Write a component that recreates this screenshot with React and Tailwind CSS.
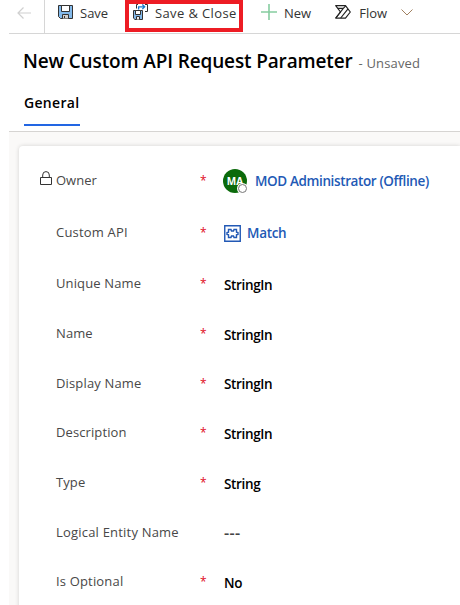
import React from "react";

function SaveIcon({ className }) {
  return (
    <svg className={className} viewBox="0 0 15 15" fill="none">
      <path d="M.5 .5H14.500V13.500H2.500L.5 11.500Z" fill="#83b9ea" stroke="#333" />
      <path d="M3.500 .5H11.500V6.500H3.500Z" fill="#fff" stroke="#333" />
      <path d="M4.500 13.500V9.500H10.500V13.500" fill="#d2d0ce" stroke="#333" />
      <path d="M6.500 11V13" stroke="#333" />
    </svg>
  );
}

function SaveCloseIcon() {
  return (
    <svg className="h-4 w-[15px] shrink-0" viewBox="0 0 15 16" fill="none">
      <path d="M.5 6.500H9.500V15.500H2L.5 14.200Z" fill="#83b9ea" stroke="#333" />
      <path d="M2.500 6.500H7.500V10.500H2.500Z" fill="#fff" stroke="#333" />
      <path d="M3.500 15.500V12.500H6.500V15.500" fill="#eee" stroke="#333" />
      <path d="M5 .5H3.500V4.500M12 .5H14.500V7.500H12" stroke="#333" />
      <path d="M5.600 5.500V2.800H11.500M9.300 .5L11.700 2.800L9.300 5.100" stroke="#1979ca" strokeWidth="1.300" />
    </svg>
  );
}

function FlowIcon() {
  return (
    <svg className="h-[14px] w-4 shrink-0" viewBox="0 0 16 14" fill="none" stroke="#222" strokeWidth="1.200" strokeLinejoin="round">
      <path d="M.7 .7H10.500L15.300 7L10.500 13.100H.7L5.500 7Z" />
      <path d="M2.800 3.400H8.300L10.700 .8M8.300 3.400L.8 13M13 3.800L5.700 13" />
    </svg>
  );
}

function LockIcon() {
  return (
    <svg className="h-[15px] w-3" viewBox="0 0 12 15" fill="none" stroke="#333" strokeWidth="1">
      <path d="M.5 6.500H11.500V13.500H.5ZM2.700 6.500V4A3.300 3.400 0 0 1 9.300 4V6.500" />
    </svg>
  );
}

function PuzzleIcon() {
  return (
    <svg className="h-[17px] w-[17px] shrink-0" viewBox="0 0 17 17" fill="none" stroke="#2259b5">
      <path d="M.75 .75H16.250V16.250H.75Z" strokeWidth="1.400" />
      <path d="M4.500 4.500H7L7.500 6H9.500L10 4.500H12.500V7.200L14 7.500V9.500L12.500 9.800V12.500H10L9.500 11H7.500L7 12.500H4.500V9.800L3 9.500V7.500L4.500 7.200Z" strokeWidth="1.400" />
    </svg>
  );
}

const rows = [
  { label: "Unique Name", value: "StringIn", h: "h-[50px]", tracking: "tracking-[0.13px]" },
  { label: "Name", value: "StringIn", h: "h-[50px]", tracking: "tracking-[0.1px]" },
  { label: "Display Name", value: "StringIn", h: "h-[49px]", tracking: "tracking-[0.15px]" },
  { label: "Description", value: "StringIn", h: "h-[50px]", tracking: "tracking-[0.1px]" },
  { label: "Type", value: "String", h: "h-[50px]", tracking: "tracking-[0.1px]" },
  { label: "Logical Entity Name", value: "---", h: "h-[49px]", tracking: "tracking-[0.2px]", optional: true },
  { label: "Is Optional", value: "No", h: "h-[50px]", tracking: "tracking-[0.17px]" },
];

function Row({ h, label, tracking, optional, locked, children }) {
  return (
    <div className={`flex items-center ${h}`}>
      <div className="flex w-[37px] shrink-0 justify-end pr-1 pb-[5px]">{locked && <LockIcon />}</div>
      <div className={`w-[144px] shrink-0 pb-[2px] text-[13px] leading-[18px] whitespace-nowrap text-[#484848] ${tracking}`}>{label}</div>
      <div className="w-[24px] shrink-0 text-[12px] leading-[18px] text-[#e00b1c]">{optional ? "" : "*"}</div>
      {children}
    </div>
  );
}

export default function App() {
  return (
    <div className="h-[605px] w-[460px] overflow-hidden bg-white pl-[9px] font-['Open_Sans','Noto_Sans',sans-serif]">
      <header className="flex h-[34px] items-start border-b border-[#d6d6d6] text-[13px] leading-[18px] text-[#333]">
        <div className="flex h-[33px] w-9 shrink-0 border-r border-[#d6d6d6] pt-[7px] pl-2">
          <svg className="h-3 w-[14px]" viewBox="0 0 14 12" fill="none" stroke="#d0d0d0" strokeWidth="1.200">
            <path d="M14 6H1M6.500 .5L1 6L6.500 11.500" />
          </svg>
        </div>
        <div className="flex w-20 shrink-0 pt-1 pl-[13px]">
          <SaveIcon className="mt-px h-[15px] w-[15px] shrink-0" />
          <span className="pl-[7px]">Save</span>
        </div>
        <div className="flex h-8 w-[118px] shrink-0 border-4 border-[#ed1c24] pl-1">
          <SaveCloseIcon />
          <span className="pl-[7px] tracking-[0.38px] whitespace-nowrap">Save &amp; Close</span>
        </div>
        <div className="flex shrink-0 pt-1 pl-[18px]">
          <svg className="h-4 w-4" viewBox="0 0 16 16" stroke="#86cda0" strokeWidth="1.600">
            <path d="M0 8H16M8 0V16" />
          </svg>
          <span className="pl-[7px]">New</span>
        </div>
        <div className="flex shrink-0 pt-1 pl-6">
          <div className="pt-px"><FlowIcon /></div>
          <span className="pl-2">Flow</span>
          <svg className="mt-[5px] ml-[14px] h-[7px] w-3" viewBox="0 0 12 7" fill="none" stroke="#a08060">
            <path d="M.5 .5L6 6L11.500 .5" />
          </svg>
        </div>
      </header>

      <div className="flex h-[97px] flex-col pl-[14px]">
        <div className="flex items-baseline pt-[13px] whitespace-nowrap">
          <h1 className="text-[19px] leading-7 font-semibold tracking-[-0.14px] text-black">New Custom API Request Parameter</h1>
          <span className="pl-[6px] text-[13px] tracking-[0.15px] text-[#666]">- Unsaved</span>
        </div>
        <div className="mt-[15px] ml-px flex">
          <div className="h-9 w-14 border-b-2 border-[#2266e3] pt-[2px] text-[14px] leading-[22px] font-semibold tracking-[0.3px] text-black">General</div>
        </div>
      </div>

      <main className="h-[474px] border-t border-[#d6d4d2] bg-[#faf9f8] pt-[14px] pl-[10px]">
        <section className="h-[470px] rounded-tl-[4px] bg-white pt-[9px] shadow-[0_0_4px_rgba(0,0,0,0.16)]">
          <Row h="h-[52px]" label="Owner" tracking="tracking-[0px]" locked>
            <div className="relative ml-[-1px] flex h-6 w-6 shrink-0 items-center justify-center rounded-full bg-[#0b6a0b] text-[10px] font-bold text-white">
              MA
              <span className="absolute right-[-1px] bottom-[-1px] h-[11px] w-[11px] rounded-full bg-white p-px">
                <span className="block h-full w-full rounded-full border border-[#777] bg-white" />
              </span>
            </div>
            <span className="pt-px pl-2 text-[13.500px] font-semibold tracking-[-0.38px] whitespace-nowrap text-[#2259b5]">MOD Administrator (Offline)</span>
          </Row>
          <Row h="h-[52px]" label="Custom API" tracking="tracking-[0.2px]">
            <PuzzleIcon />
            <span className="pt-px pl-[6px] text-[13.500px] font-semibold tracking-[-0.3px] text-[#2259b5]">Match</span>
          </Row>
          {rows.map((r) => (
            <Row key={r.label} {...r}>
              <div className={`pt-px text-[13.500px] leading-[18px] font-semibold ${r.optional ? "text-[16px] tracking-[0.4px] text-[#444]" : "tracking-[-0.35px] text-black"}`}>{r.value}</div>
            </Row>
          ))}
        </section>
      </main>
    </div>
  );
}
